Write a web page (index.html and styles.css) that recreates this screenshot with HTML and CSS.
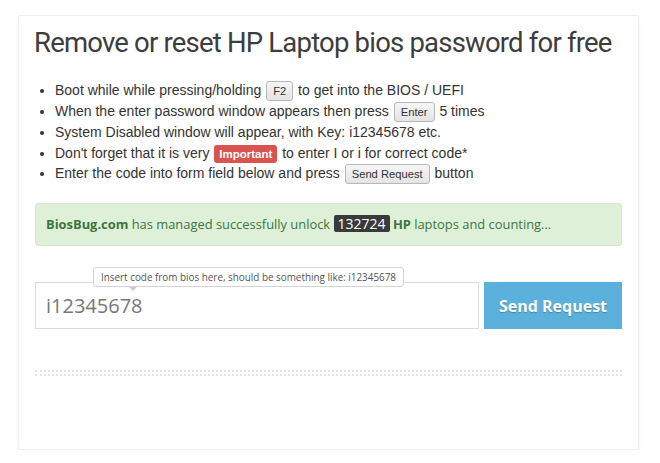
FILE: index.html
```html
<!DOCTYPE html>
<html lang='en'>
<head>
	<meta charset='UTF-8'>
	<meta name='viewport' content='width=device-width, initial-scale=1.0'>
	<title>HP Laptop bios password - BiosBug</title>
	<link rel="stylesheet" href="styles.css">
</head>
<body>
	<div class='page'>
		<div class='card'>
			<h1 class='title'>Remove or reset HP Laptop bios password for free</h1>
			<ul class='steps'>
				<li>Boot while while pressing/holding <span class='key'>F2</span> to get into the BIOS / UEFI</li>
				<li>When the enter password window appears then press <span class='key'>Enter</span> 5 times</li>
				<li>System Disabled window will appear, with Key: i12345678 etc.</li>
				<li>Don't forget that it is very <span class='label-danger'>Important</span> to enter I or i for correct code*</li>
				<li>Enter the code into form field below and press <span class='key'>Send Request</span> button</li>
			</ul>

			<div class='alert'>
				<b>BiosBug.com</b> has managed successfully unlock <span class='counter'>132724</span> <b>HP</b> laptops and counting...
			</div>

			<form class='code-form'>
				<div class='code-field'>
					<input class='code-input' type='text' placeholder='i12345678'>
					<div class='tip'>Insert code from bios here, should be something like: i12345678</div>
				</div>
				<button type='button' class='send-btn'>Send Request</button>
			</form>

			<div class='divider'></div>
		</div>
	</div>
</body>
</html>
```

FILE: styles.css
```css
html, body{
	margin:0;
	background-color:white;
	font-family:"Liberation Sans", Arial, sans-serif;
	color:#333;
}
.page{
	padding:15px 21px 0 18px;
}
.card{
	width:621px;
	box-sizing:border-box;
	padding:12px 16px 73px 16px;
	border:1px solid #f0f0f0;
	border-radius:0 0 4px 4px;
	box-shadow:0 2px 3px rgba(0,0,0,.08);
	background-color:white;
}
.title{
	margin:0 0 22px -1px;
	font-family:Roboto, sans-serif;
	font-weight:400;
	font-size:27.5px;
	line-height:1.1;
	color:#3d3d3d;
	letter-spacing:-.8px;
	white-space:nowrap;
}
.steps{
	margin:0;
	padding-left:20px;
	font-size:14px;
	line-height:20.6px;
}
.key{
	display:inline-block;
	padding:0 6px;
	margin:0 1px;
	height:18px;
	line-height:18px;
	font-size:11.2px;
	vertical-align:0;
	color:#333;
	background:linear-gradient(#f6f6f6, #e4e4e4);
	border:1px solid #b8b8b8;
	border-radius:3px;
}
.label-danger{
	display:inline-block;
	padding:0 5px;
	margin:0 1px;
	height:18px;
	line-height:18px;
	font-size:11.5px;
	font-weight:bold;
	vertical-align:0;
	color:white;
	background-color:#d9534f;
	border-radius:3px;
}
.alert{
	margin-top:19px;
	padding:11px 10px;
	font-family:"Open Sans", sans-serif;
	font-size:12.9px;
	line-height:19px;
	color:#3c763d;
	background-color:#dff0d8;
	border:1px solid #d6e9c6;
	border-radius:3px;
}
.counter{
	display:inline-block;
	padding:0 4px;
	line-height:17px;
	font-size:14px;
	color:white;
	background-color:#3a3a3a;
	border-radius:2px;
}
.code-form{
	display:flex;
	gap:5px;
	margin-top:36px;
}
.code-field{
	position:relative;
	flex:1 1 auto;
	display:flex;
}
.code-input{
	flex:1 1 auto;
	height:47px;
	box-sizing:border-box;
	padding:0 10px;
	font-family:"Open Sans", sans-serif;
	font-size:20px;
	color:#555;
	border:1px solid #dcdcdc;
	border-radius:0;
	outline:none;
}
.code-input::placeholder{
	color:#777;
}
.tip{
	position:absolute;
	left:58px;
	top:-15px;
	padding:0 7px;
	line-height:18px;
	font-family:"Open Sans", sans-serif;
	font-size:9.9px;
	color:#555;
	background-color:white;
	border:1px solid #d4d4d4;
	border-radius:3px;
	white-space:nowrap;
}
.tip::after{
	content:'';
	position:absolute;
	left:35px;
	bottom:-5px;
	border-left:4px solid transparent;
	border-right:4px solid transparent;
	border-top:4px solid #ccc;
}
.send-btn{
	width:138px;
	height:47px;
	border:none;
	font-family:"Open Sans", sans-serif;
	font-size:16px;
	font-weight:bold;
	color:white;
	text-shadow:0 1px 1px rgba(0,0,0,.25);
	background-color:#5bb1dc;
}
.divider{
	margin-top:41px;
	height:2px;
	border-top:2px dotted #e2e2e2;
	border-bottom:2px dotted #e6e6e6;
}
```
